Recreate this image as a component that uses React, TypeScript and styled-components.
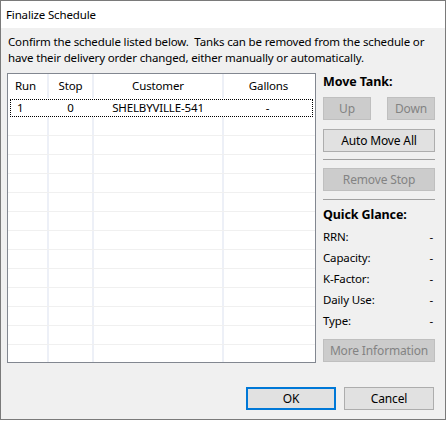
import React from 'react';
import styled, { createGlobalStyle } from 'styled-components';

const Global = createGlobalStyle`
  html, body { margin: 0; padding: 0; background: #ffffff; }
  body {
    font-family: "Noto Sans", "Segoe UI", sans-serif;
    font-size: 11.5px;
    letter-spacing: -0.15px;
    color: #000;
  }
  * { box-sizing: border-box; }
`;

const Window = styled.div`
  width: 446px;
  height: 420px;
  border: 1px solid #7a7a7a;
  background: #f0f0f0;
  display: flex;
  flex-direction: column;
`;

const TitleBar = styled.div`
  height: 27px;
  background: #ffffff;
  display: flex;
  align-items: center;
  padding-left: 5px;
`;

const Body = styled.div`
  flex: 1;
  display: flex;
  flex-direction: column;
  padding: 6px 9px 0 6px;
`;

const Description = styled.div`
  margin: 0 0 0 1px;
  line-height: 16px;
`;

const Line = styled.div`
  white-space: pre;
`;

const Main = styled.div`
  display: flex;
  gap: 7px;
  margin-top: 7px;
`;

const ListView = styled.div`
  width: 309px;
  height: 290px;
  border: 1px solid #828790;
  background: #ffffff;
  overflow: hidden;
  display: flex;
  flex-direction: column;
`;

const GRID = '41px 45px 130px 1fr';

const HeaderRow = styled.div`
  display: grid;
  grid-template-columns: ${GRID};
  height: 24px;
  flex: none;
`;

const Row = styled.div<{ $focused?: boolean }>`
  display: grid;
  grid-template-columns: ${GRID};
  height: 19px;
  flex: none;
  border-bottom: 1px solid ${p => (p.$focused ? 'transparent' : '#f0f0f0')};
  ${p => p.$focused && `
    margin: 1px 2px 0 2px;
    height: 18px;
    outline: 1px dotted #000;
    outline-offset: -1px;
    grid-template-columns: 39px 45px 130px 1fr;
  `}
`;

const Cell = styled.div<{ $align?: 'left' | 'center'; $line?: boolean }>`
  display: flex;
  align-items: center;
  justify-content: ${p => (p.$align === 'left' ? 'flex-start' : 'center')};
  padding-left: ${p => (p.$align === 'left' ? '7px' : '0')};
  border-right: 2px solid ${p => (p.$line ? '#edf0f7' : 'transparent')};
  white-space: nowrap;
  line-height: 1;
`;

const Side = styled.div`
  width: 112px;
  display: flex;
  flex-direction: column;
`;

const Heading = styled.div<{ $top?: number }>`
  font-weight: 700;
  font-size: 12.5px;
  letter-spacing: -0.1px;
  line-height: 18px;
  margin-top: ${p => p.$top ?? 0}px;
`;

const ButtonRow = styled.div`
  display: flex;
  justify-content: space-between;
  margin-top: 6px;
`;

const Button = styled.button<{ $w?: number; $top?: number; $default?: boolean }>`
  font-family: inherit;
  font-size: 12px;
  letter-spacing: -0.15px;
  width: ${p => (p.$w ? `${p.$w}px` : '100%')};
  height: 23px;
  margin: ${p => p.$top ?? 0}px 0 0 0;
  padding: 0;
  background: #e1e1e1;
  color: #000;
  border: ${p => (p.$default ? '2px solid #0078d7' : '1px solid #adadad')};
  border-radius: 0;
  display: flex;
  align-items: center;
  justify-content: center;
  &:disabled {
    background: #cccccc;
    border-color: #bfbfbf;
    color: #838383;
  }
`;

const Separator = styled.div<{ $top: number }>`
  height: 1px;
  background: #a0a0a0;
  margin-top: ${p => p.$top}px;
`;

const InfoList = styled.div`
  display: flex;
  flex-direction: column;
  margin-top: 2px;
`;

const InfoRow = styled.div`
  display: flex;
  justify-content: space-between;
  line-height: 21px;
  padding-right: 2px;
`;

const Footer = styled.div`
  display: flex;
  justify-content: flex-end;
  gap: 8px;
  margin-top: 24px;
  padding-right: 2px;
`;

const columns = [
  { label: 'Run', align: 'left' as const },
  { label: 'Stop', align: 'center' as const },
  { label: 'Customer', align: 'center' as const },
  { label: 'Gallons', align: 'center' as const },
];

const data = [['1', '0', 'SHELBYVILLE-541', '-']];

const info = ['RRN:', 'Capacity:', 'K-Factor:', 'Daily Use:', 'Type:'];

export default function App() {
  return (
    <>
      <Global />
      <Window>
        <TitleBar>Finalize Schedule</TitleBar>
        <Body>
          <Description>
            <Line>{'Confirm the schedule listed below.  Tanks can be removed from the schedule or'}</Line>
            <Line>have their delivery order changed, either manually or automatically.</Line>
          </Description>
          <Main>
            <ListView>
              <HeaderRow>
                {columns.map((c, i) => (
                  <Cell key={c.label} $align={c.align} $line={i < 3}>
                    {c.label}
                  </Cell>
                ))}
              </HeaderRow>
              {data.map((r, ri) => (
                <Row key={ri} $focused>
                  {r.map((v, i) => (
                    <Cell key={i} $align={columns[i].align}>
                      {v}
                    </Cell>
                  ))}
                </Row>
              ))}
              {Array.from({ length: 14 }).map((_, ri) => (
                <Row key={`e${ri}`}>
                  {columns.map((c, i) => (
                    <Cell key={i} $align={c.align} $line={i < 3} />
                  ))}
                </Row>
              ))}
            </ListView>
            <Side>
              <Heading>Move Tank:</Heading>
              <ButtonRow>
                <Button $w={48} disabled>Up</Button>
                <Button $w={48} disabled>Down</Button>
              </ButtonRow>
              <Button $top={9}>Auto Move All</Button>
              <Separator $top={7} />
              <Button $top={8} disabled>Remove Stop</Button>
              <Separator $top={8} />
              <Heading $top={6}>Quick Glance:</Heading>
              <InfoList>
                {info.map(l => (
                  <InfoRow key={l}>
                    <span>{l}</span>
                    <span>-</span>
                  </InfoRow>
                ))}
              </InfoList>
              <Button $top={8} disabled>More Information</Button>
            </Side>
          </Main>
          <Footer>
            <Button $w={90} $default>OK</Button>
            <Button $w={90}>Cancel</Button>
          </Footer>
        </Body>
      </Window>
    </>
  );
}
